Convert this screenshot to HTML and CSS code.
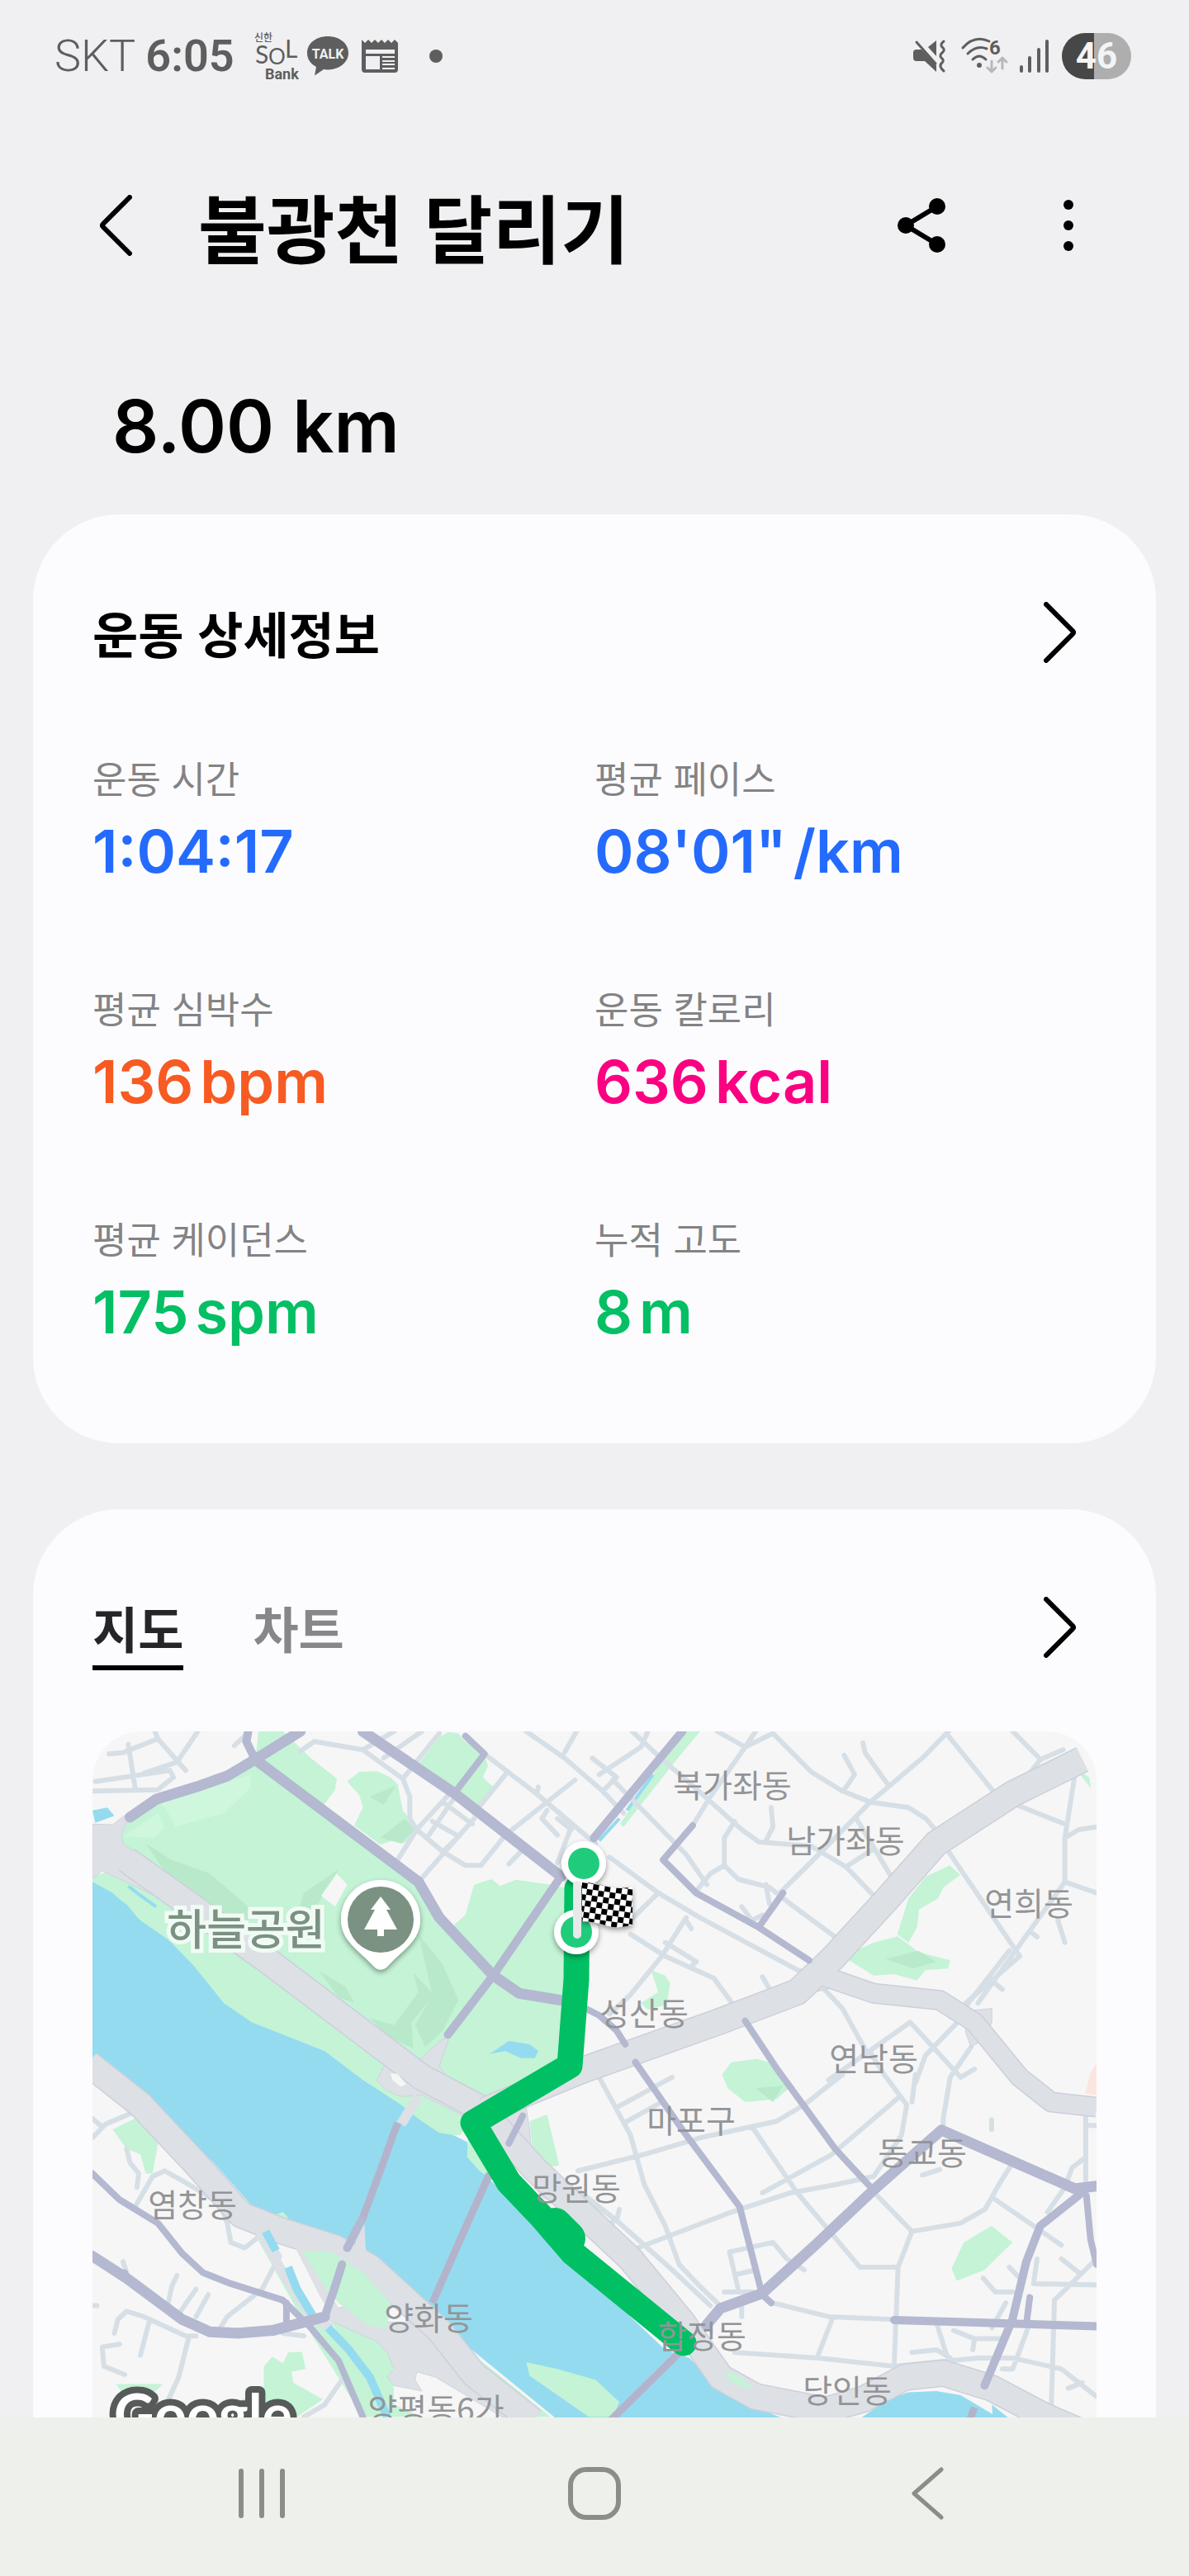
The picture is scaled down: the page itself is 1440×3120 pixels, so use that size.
FILE: index.html
```html
<!DOCTYPE html>
<html lang="ko">
<head>
<meta charset="utf-8">
<meta name="viewport" content="width=device-width, initial-scale=1">
<title>불광천 달리기</title>
<link rel="stylesheet" href="styles.css">
</head>
<body>
<div class="screen">
  <div class="status">
    <div class="status-left">
      <span class="clock"><span class="carrier">SKT</span><time class="time">6:05</time></span>
      <svg class="ico-sol" width="54" height="58" viewBox="0 0 54 58" role="img" aria-label="신한 SOL Bank">
        <text class="sol-ko" x="0" y="11">신한</text>
        <text class="sol-s" x="1" y="38">S</text>
        <text class="sol-o" x="17" y="39">O</text>
        <text class="sol-l" x="37" y="31">L</text>
        <text class="sol-bank" x="13" y="57">Bank</text>
      </svg>
      <svg class="ico-talk" width="50" height="48" viewBox="0 0 50 48" role="img" aria-label="TALK">
        <path d="M25 0C11 0 0 8.500 0 20c0 8 4.500 13.500 11 17l-2 10.500L20 40c1.600.3 3.300.4 5 .4 14 0 25-8.900 25-20.400S39 0 25 0z" fill="#5e5e5e"/>
        <text class="talk-text" x="25" y="27">TALK</text>
      </svg>
      <svg class="ico-news" width="44" height="40" viewBox="0 0 44 40" aria-hidden="true">
        <path d="M0 0l4 4 4-4 4 4 4-4 4 4 4-4 4 4 4-4 4 4 4-4 4 4V36q0 4-4 4H4q-4 0-4-4z" fill="#5e5e5e"/>
        <path d="M5 12h35v5H5zM5 20h17v16H5zM25 20h15v2H25zM25 25h15v2H25zM25 29h15v2H25zM25 34h15v2H25z" fill="#f0f0f2"/>
      </svg>
      <span class="more-dot"></span>
    </div>
    <div class="status-right">
      <svg width="40" height="40" viewBox="0 0 40 40" aria-hidden="true">
        <path d="M28 1v19L18 9zM4 12h6l18 19v8L14 26H4q-4 0-4-4v-6q0-4 4-4z" fill="#5e5e5e"/>
        <path d="M4 3l23 26" stroke="#5e5e5e" stroke-width="3" stroke-linecap="round"/>
        <path d="M37 2q-5 4-2 7 4 3 1 6-5 4-2 7 4 3 1 6-5 4 2 10" fill="none" stroke="#5e5e5e" stroke-width="3" stroke-linecap="round"/>
      </svg>
      <svg class="ico-wifi" width="58" height="46" viewBox="0 0 58 46" aria-hidden="true">
        <g fill="none" stroke="#5e5e5e" stroke-width="3" stroke-linecap="round">
          <path d="M2 13Q16-3 34 5M8 20q11-11 23-6M14 27q8-8 16 0"/>
        </g>
        <circle cx="22" cy="34" r="3" fill="#5e5e5e"/>
        <text class="wifi-six" x="34" y="21">6</text>
        <path d="M37 29v13m-5-5l5 5 5-5M50 38V25m-5 5l5-5 5 5" fill="none" stroke="#b8b8ba" stroke-width="3" stroke-linecap="round" stroke-linejoin="round"/>
      </svg>
      <svg width="38" height="40" viewBox="0 0 38 40" aria-hidden="true">
        <path d="M3 33v5M13 22v16M24 12v26M34 2v36" stroke="#5e5e5e" stroke-width="4" stroke-linecap="round"/>
      </svg>
      <span class="battery">46</span>
    </div>
  </div>

  <header class="topbar">
    <button class="icon-btn" type="button" aria-label="뒤로">
      <svg width="40" height="74" viewBox="0 0 40 74"><path d="M37 3L5 35q-2 2 0 4l32 32" fill="none" stroke="#000" stroke-width="6" stroke-linecap="round"/></svg>
    </button>
    <h1 class="title">불광천 달리기</h1>
    <button class="icon-btn" type="button" aria-label="공유">
      <svg width="58" height="66" viewBox="0 0 58 66"><path d="M48 10L10 33l38 23" fill="none" stroke="#000" stroke-width="6"/><circle cx="10" cy="33" r="10"/><circle cx="48" cy="10" r="10"/><circle cx="48" cy="56" r="10"/></svg>
    </button>
    <button class="icon-btn more" type="button" aria-label="더보기">
      <svg width="12" height="64" viewBox="0 0 12 64"><circle cx="6" cy="7" r="6"/><circle cx="6" cy="32" r="6"/><circle cx="6" cy="57" r="6"/></svg>
    </button>
  </header>

  <main class="content">
    <p class="distance">8.00 km</p>

    <section class="card details">
      <div class="card-head">
        <h2 class="card-title">운동 상세정보</h2>
        <button class="icon-btn chevron" type="button" aria-label="운동 상세정보 열기">
          <svg width="40" height="74" viewBox="0 0 40 74"><path d="M3 3l32 32q2 2 0 4L3 71" fill="none" stroke="#000" stroke-width="6" stroke-linecap="round"/></svg>
        </button>
      </div>
      <dl class="stats">
        <div><dt>운동 시간</dt><dd class="blue">1:04:17</dd></div>
        <div><dt>평균 페이스</dt><dd class="blue">08'01"<span class="unit">/km</span></dd></div>
        <div><dt>평균 심박수</dt><dd class="orange">136<span class="unit">bpm</span></dd></div>
        <div><dt>운동 칼로리</dt><dd class="pink">636<span class="unit">kcal</span></dd></div>
        <div><dt>평균 케이던스</dt><dd class="green">175<span class="unit">spm</span></dd></div>
        <div><dt>누적 고도</dt><dd class="green">8<span class="unit">m</span></dd></div>
      </dl>
    </section>

    <section class="card route">
      <div class="card-head tabs-head">
        <div class="tabs" role="tablist">
          <button class="tab active" type="button" role="tab" aria-selected="true">지도</button>
          <button class="tab" type="button" role="tab" aria-selected="false">차트</button>
        </div>
        <button class="icon-btn chevron" type="button" aria-label="지도 열기">
          <svg width="40" height="74" viewBox="0 0 40 74"><path d="M3 3l32 32q2 2 0 4L3 71" fill="none" stroke="#000" stroke-width="6" stroke-linecap="round"/></svg>
        </button>
      </div>
      <div class="map">
        <svg class="map-svg" viewBox="0 0 1216 900" preserveAspectRatio="xMidYMin slice" role="img" aria-label="달리기 경로 지도">
          <defs>
            <pattern id="check" width="14" height="14" patternUnits="userSpaceOnUse" patternTransform="translate(593 183) rotate(8)">
              <rect width="14" height="14" fill="#fff"/><path d="M0 0h7v7H0zM7 7h7v7H7z"/>
            </pattern>
            <filter id="shade" x="-30%" y="-30%" width="160%" height="160%"><feDropShadow dx="0" dy="3" stdDeviation="3" flood-opacity="0.4"/></filter>
          </defs>
          <g class="base" transform="scale(0.4209 0.3333) translate(-52 -53)">
            <!-- parks north of the river -->
            <path class="park" d="M52 580L90 565 140 590 100 440 165 370 240 300 440 220 520 160 530 53H600L680 150 755 225 750 265 715 325 990 600 1050 730 1085 765 1125 720 1150 610 1200 590 1225 615 1270 592 1370 610 1440 630V1240L1280 1340 1170 1400 1130 1480 1110 1520 1050 1520 930 1500 720 1300 52 700z"/>
            <path class="water" d="M52 600L110 640 190 740 270 810 340 900 430 1040 510 1110 720 1215 830 1320 940 1410 1000 1470 1050 1510 1090 1520 1130 1545 1140 1610 1210 1700 1300 1800 1450 2000 1700 2300 1770 2330 1860 2450 1960 2510 2060 2560 2700 2560 2640 2500 2650 2700H1300L1380 2544 1100 2255 1060 2200 940 2110 830 1940 700 1890 610 1830 520 1790 400 1620 220 1400 130 1315 52 1235z"/>
            <path class="water" d="M2250 2560L2340 2480 2400 2455 2480 2450 2550 2465 2650 2540 2660 2560z"/>
            <path class="park" d="M940 1410L1000 1470 1050 1512 1100 1522 1130 1500 1120 1430 1000 1370zM1132 1535L1130 1600 1165 1650 1210 1690 1190 1600zM785 235L820 200 870 198 910 220 930 245 945 340 985 400 970 440 945 460 915 450 880 465 805 395 830 330 820 285zM985 180L1050 75 1075 55 1105 60 1120 85 1180 135 1190 180 1175 220 1210 260 1180 310 1150 325 1080 260zM1745 53H1800L1730 160 1580 400 1570 390 1660 220zM2519 540L2549 575 2500 620 2485 660 2430 700 2425 765 2400 820 2368 790 2400 660 2450 580zM2224 845L2240 855 2300 820 2369 798 2429 855 2520 885 2514 915 2449 920 2424 958 2359 935 2299 940 2224 880zM1659 920L1700 940 1714 970 1705 1045 1650 1065 1630 1040 1680 1000zM1864 1300L1890 1255 1964 1243 2010 1260 2055 1350 2020 1390 1930 1400 1880 1350zM2639 1850L2699 1910 2619 2010 2539 2050 2524 2005 2559 1910zM110 1500L190 1450 245 1520 225 1660 205 1660 190 1590 150 1570zM545 2360L570 2325 600 2350 615 2310 655 2308 665 2370 625 2380 630 2420 715 2480 640 2544 480 2480 545 2460zM120 2425L255 2425 225 2460 140 2460zM1085 2260L1200 2370 1370 2544 1300 2544 1150 2390zM1300 2345L1390 2370 1500 2410 1568 2490 1550 2544 1480 2544 1310 2395zM2875 180L2920 220 2925 260z"/>
            <path class="park" d="M510 1860L700 2175 850 2400 890 2544H830L660 2200zM740 2200L860 2230 915 2310 920 2500 1000 2544H900zM575 1810L600 1800 615 1820 600 1840z"/>
            <path class="paper" d="M1315 1415L1449 1340V1600L1400 1640 1360 1440z"/>
            <path class="park" d="M1310 1470L1360 1445 1395 1630 1325 1650z"/>
            <path class="park-light" d="M240 300L440 235 510 210 505 260 430 350 290 400 270 350zM140 435L240 350 260 400 230 440z"/>
            <path class="park-dark" d="M205 460L280 520 390 570 500 690 500 740 400 700 280 600zM660 640L760 555 700 680 640 720zM990 790L1060 900 1105 1030 1060 1140 1010 1200 980 1120 1030 1010zM850 1095L920 1120 990 1000 975 930 1035 1010 970 1110 975 1205 900 1160zM705 925L780 980 805 1040 760 1020zM880 440L950 370 980 410 940 460zM850 290L925 250 890 320zM2334 880L2429 850 2480 890 2414 915zM1960 1350L2040 1340 2010 1400z"/>
            <path class="paper" d="M755 570L785 610 750 690 710 650z"/>
            <path class="water" d="M52 340L95 330 115 360 60 385zM1195 1225L1250 1178 1310 1190 1335 1215 1325 1240 1285 1240 1240 1215z"/>
            <path class="stream" d="M155 615L180 640 235 690M110 650L150 690 185 745M1665 210L1590 340M1568 370L1510 450"/>
            <path class="coral" d="M2941 1260L2925 1290 2908 1370 2941 1375z"/>

            <!-- local streets -->
            <path class="street" d="M52 270L240 265 285 220 275 195 60 235M100 135L140 130 240 80 320 195M240 80L232 53M355 53L295 165 200 205M155 100L175 260M460 105L490 70M650 125L690 90 830 120 920 53M830 120L945 225 965 290 965 370 985 410 1060 490 1125 540 1170 540 1240 430 1440 230M985 410L930 520M985 410L1090 265M1020 430L1090 300M1060 310L1145 390M1030 380L1100 430M1150 370L990 600M1060 490L1110 430M1000 53L890 150M945 225L1050 60M1180 135L1330 280 1470 430 1500 460M1330 280L1335 255M1240 210L1150 350M1360 340L1345 370 1390 430M1390 370L1430 410M1300 53L1410 150 1520 270 1580 350M1410 130L1445 53M1520 270L1560 220 1490 150M1250 535L1300 470M1390 530L1430 400"/>
            <path class="street" d="M1605 53L1700 165 1770 240 1920 410 1970 455 2120 470 2220 545 2300 650M1650 53L1630 110 1510 210M1850 53L1930 110 2010 60M1960 53L1930 110 1830 290 1779 395M2010 60L2120 200 2210 270 2290 310 2400 330 2450 370 2490 430M2269 95L2275 130 2340 245M2215 140L2245 210 2215 265M2700 53L2780 155M2515 53L2440 150 2290 310 2150 490 2030 640M2515 70L2650 280 2700 315 2850 390M2845 120L2780 155 2720 250M2880 200L2850 440 2850 600 2600 1040M2941 400L2890 410 2850 440M2850 600L2941 640M2510 480L2720 870 2520 1090M2690 850L2560 1060M2650 970L2670 990M2750 780L2770 800M2830 740L2850 820M1550 230L1760 500 1820 610"/>
            <path class="street" d="M1540 510L1680 640 1800 730 2080 920 2114 930M1680 640L1600 740M1600 790L1700 870 1840 950 1895 1045M1760 730L1690 870 1600 1010 1540 1080M1760 740L1775 770M1700 820L1790 890 1780 900M1900 380L1870 440 1870 540 1910 590 2000 620 2060 680 2200 810M1870 540L1830 570 1785 640M2005 330L2010 400 1990 450M2220 545L2300 480M2250 370L2350 580M1980 945L2000 990M1920 690L1950 740 1980 720M1990 610L2000 680M2150 980L2210 1060 2280 1220M2170 1320L2405 1110 2550 1310 2590 1280M2549 1100L2449 1230 2420 1330M2580 1200L2520 1310 2500 1460 2500 1500M2290 1220L2330 1300 2395 1410 2380 1520 2300 1670 2190 1700 2060 1730 1890 1800 1580 1950M2420 1300L2410 1400"/>
            <path class="street" d="M1510 1310L1600 1520 1640 1700 1700 1850 1740 1990 1800 2070 1850 2130M1560 1420L1720 1310M1590 1470L1690 1400M1449 1650L1640 1590 1800 1530 2020 1470 2100 1410 2210 1300M1950 1490L2080 1730 2240 1970 2260 2000 2360 2000M1980 1730L2180 1590 2370 1385M2310 1740L2410 1870 2370 2000 2359 2350M2410 1870L2550 1840 2620 1790 2660 1700 2700 1620M2645 1750L2840 1920M2440 1665L2490 1645M2639 1465V1500M2910 1450V1700M2910 1600L2870 1640 2850 1710 2800 1800M2910 1485H2941M1460 1740L1560 1830 1720 2010 1830 2140M1550 1830L1540 1880 1580 1950M1449 1720L1560 1830M1885 1945L2010 1910 2050 1970 2100 2010M1885 1945L1910 2080M1870 2090H1950M1910 2025L1960 2010M1920 2120V2180M2010 2130L2170 2180 2360 2190M2180 2190L2140 2320M1900 2310L2140 2330 2359 2360 2600 2330 2700 2330 2840 2370 2941 2470M2480 2200L2510 2320M2530 2230L2590 2260 2680 2260M2590 2260L2585 2300M2410 2310L2480 2300 2520 2330M2760 2060L2941 2065M2770 1970L2760 2060M2941 1970L2820 2120 2810 2544M2840 1970L2890 2020M2690 2000L2720 2040M2615 2040L2650 2090 2700 2090M2680 2130L2640 2220M2750 2200L2700 2370 2670 2370M2860 2440L2900 2420"/>
            <path class="street" d="M52 1530L90 1480 165 1440M52 1460L80 1490M150 1570L160 1620 185 1660 180 1710M175 1780L225 1670 260 1650 330 1700 420 1770 440 1840 450 1910 490 1930 530 1890M140 1980L150 2020M295 2030L280 2070 270 2130M350 2080L300 2170M385 2100L350 2180M115 2240L125 2190 150 2160 200 2180 320 2250 350 2250M215 2200L190 2320M130 2280L80 2290 85 2360 145 2390M330 2250L300 2400 260 2510 240 2544M420 2220L440 2180 540 2080 590 1960 560 1900 520 1850M600 2240L660 2250M770 2410L720 2500 660 2544M52 2140H65M1568 1790L1560 1830"/>

            <!-- expressways -->
            <path class="hwy-fill" d="M52 390L110 392 165 340 135 430 140 460 215 530 215 560 260 600 230 650 150 600 80 560 52 590zM870 1320L900 1250 1000 1240 1050 1180 1080 1160 1050 1270 1110 1370 1170 1400 1120 1450 1000 1375 940 1380 900 1360zM735 2155L790 2140 900 2200 1060 2200 1160 2400 1310 2544H1230L1040 2400 985 2380 980 2410 1000 2450 920 2430 900 2400 920 2370 900 2310 870 2270 780 2220 730 2190zM1190 1490L1300 1420 1310 1500 1320 1650 1400 1760 1350 1750zM2130 930L2185 830 2190 880 2180 940 2200 980 2130 1000zM2560 1070L2640 1060 2640 1110 2620 1170 2580 1200 2565 1150z"/>
            <path class="hwy-edge wide" d="M150 520L250 610 560 890 1000 1310 1180 1430"/>
            <path class="hwy wide" d="M150 520L250 610 560 890 1000 1310 1180 1430"/>
            <path class="hwy-edge wide" d="M1200 1470L1330 1650 1600 1970 1750 2200 1810 2310 1860 2400 1960 2470 2160 2520 2270 2480 2390 2400 2500 2385 2640 2440 2790 2540 2900 2600"/>
            <path class="hwy wide" d="M1200 1470L1330 1650 1600 1970 1750 2200 1810 2310 1860 2400 1960 2470 2160 2520 2270 2480 2390 2400 2500 2385 2640 2440 2790 2540 2900 2600"/>
            <path class="hwy-edge wide" d="M1180 1430L1460 1285 1850 1110 2080 1000 2180 880 2340 660 2480 460 2700 280 2900 155"/>
            <path class="hwy-edge mid" d="M2150 940L2300 1005 2490 1030 2590 1110 2720 1310 2810 1400 2941 1418"/>
            <path class="hwy wide" d="M1180 1430L1460 1285 1850 1110 2080 1000 2180 880 2340 660 2480 460 2700 280 2900 155"/>
            <path class="hwy mid" d="M2150 940L2300 1005 2490 1030 2590 1110 2720 1310 2810 1400 2941 1418"/>
            <path class="hwy-edge wide" d="M40 1260L190 1410 350 1625 480 1810 600 1870 750 1930 850 2000 1050 2230 1150 2390 1320 2560"/>
            <path class="hwy wide" d="M40 1260L190 1410 350 1625 480 1810 600 1870 750 1930 850 2000 1050 2230 1150 2390 1320 2560"/>
            <path class="hwy ramp" d="M530 1860L590 2000 680 2180 740 2220M640 1900L720 2100 750 2160M820 1840L825 1960M940 1480L990 1380"/>
            <path class="park" d="M655 1940L740 1945 830 2020 910 2130 900 2220 850 2215 760 2130 725 2080z"/>
            <path class="channel" d="M550 1870L580 1940M615 2000L640 2080 685 2175M730 2220L790 2300 850 2400 900 2544"/>
            <path class="park" d="M1870 2375L1920 2400 1955 2445 1890 2420z"/>
            <path class="paper" d="M910 1295L930 1298 955 1335 940 1345 915 1320z"/>

            <!-- arterial roads -->
            <path class="road thick" d="M160 365L235 300 350 255 440 215 520 155 650 53M520 155L990 600 1050 730 1205 940 1280 1005 1400 1030M830 53L1090 275 1400 580M1819 2210L1859 2150 1979 2095 2140 1910 2299 1720 2495 1502 2879 1715 2941 1705M52 1960L150 2040 310 2190 390 2235 470 2240 570 2230 720 2180"/>
            <path class="road" d="M500 53L495 90 520 155M1075 1155L1205 940 1400 580M1495 440L1749 53M720 2180L745 2090 770 1990M785 1930L830 1820M2899 1730L2779 1850 2739 1980 2699 2190 2619 2430M2359 2192L2619 2202 2941 2215"/>
            <path class="road thin" d="M1125 70L1180 135 1095 275M1440 1040L1510 1085 1560 1140 1585 1190M1779 395L1694 520 1789 640 1969 765 2114 885M2039 640L1969 765M1930 1105L2019 1275 2189 1570 2299 1720M1614 1255L1749 1500 1914 1780 1979 2100 2005 2130M2912 1740L2924 1900 2941 1990M2749 2110L2741 2190M52 1660L130 1755 240 1840 310 1950 370 2020 450 2060 600 2120 680 2220 760 2340 830 2544M610 2130V2200M1250 1550L1290 1450M145 2020L140 2040"/>
            <path class="bridge" d="M830 1820L880 1650 930 1475M1030 2130L1110 1900 1195 1660M1540 2560L1749 2300M2575 2560L2590 2510"/>
          </g>

          <g class="place">
            <text x="775" y="80">북가좌동</text>
            <text x="912" y="147">남가좌동</text>
            <text x="1134" y="223">연희동</text>
            <text x="668" y="356">성산동</text>
            <text x="946" y="411">연남동</text>
            <text x="725" y="486">마포구</text>
            <text x="1005" y="525">동교동</text>
            <text x="121" y="588">염창동</text>
            <text x="407" y="725">양화동</text>
            <text x="914" y="813">당인동</text>
            <text x="416" y="836">양평동6가</text>
          </g>

          <path class="run" d="M587 190L586 300 578 405 461 474 504 546 544 588 582 632 716 741"/>
          <path class="run bulge" d="M560 598L576 614"/>
          <g class="place">
            <text x="586" y="568">망원동</text>
            <text x="738" y="747">합정동</text>
          </g>
          <text class="park-name" x="186" y="259">하늘공원</text>
          <g filter="url(#shade)">
            <path d="M349 180c-27 0-48 21-48 48 0 26 22 37 38 55q10 11 20 0c16-18 38-29 38-55 0-27-21-48-48-48z" fill="#fff"/>
          </g>
          <circle cx="349" cy="228" r="40" fill="#7b9182"/>
          <path d="M349 200l-12 16h5l-13 24h16v8h8v-8h16l-13-24h5z" fill="#fff"/>
          <g filter="url(#shade)"><circle cx="586" cy="243" r="27" fill="#fff"/><circle cx="595" cy="160" r="27" fill="#fff"/></g>
          <circle cx="586" cy="243" r="19" fill="#20cc7b"/>
          <circle cx="595" cy="160" r="19" fill="#20cc7b"/>
          <path d="M593 183q14 0 30 5 16 4 31 0v46q-16 6-32 1-15-5-29-5z" fill="url(#check)" filter="url(#shade)"/>
          <path d="M587 186v60" stroke="#e9e9ec" stroke-width="10" stroke-linecap="round"/>
          <text class="google" x="26" y="852">Google</text>
        </svg>
      </div>
    </section>
  </main>

  <nav class="navbar" aria-label="시스템 탐색">
    <button class="icon-btn" type="button" aria-label="최근 앱"><svg width="58" height="64" viewBox="0 0 58 64"><path d="M4 5v54M29 5v54M54 5v54" stroke="#8b8e86" stroke-width="6" stroke-linecap="round"/></svg></button>
    <button class="icon-btn" type="button" aria-label="홈"><svg width="64" height="64" viewBox="0 0 64 64"><rect x="3" y="3" width="58" height="58" rx="19" fill="none" stroke="#8b8e86" stroke-width="6"/></svg></button>
    <button class="icon-btn" type="button" aria-label="이전"><svg width="40" height="64" viewBox="0 0 40 64"><path d="M37 3L4 32l33 29" fill="none" stroke="#8b8e86" stroke-width="5" stroke-linecap="round" stroke-linejoin="round"/></svg></button>
  </nav>
</div>
</body>
</html>
```
FILE: styles.css
```css
* { box-sizing: border-box; }

body {
  margin: 0;
  background: #f0f0f2;
  color: #000;
  font-family: "Noto Sans CJK KR", sans-serif;
}

h1, h2, p, dl, dd { margin: 0; }

.screen {
  display: flex;
  flex-direction: column;
  height: 100vh;
}

.icon-btn {
  display: flex;
  align-items: center;
  justify-content: center;
  padding: 0;
  border: 0;
  background: none;
}

/* status bar */
.status {
  flex: none;
  display: flex;
  align-items: center;
  justify-content: space-between;
  height: 136px;
  padding: 0 70px 0 66px;
  color: #5e5e5e;
  font-family: Roboto, sans-serif;
}

.status-left,
.status-right {
  display: flex;
  align-items: center;
}

.clock {
  display: flex;
  gap: 12px;
  font-size: 54px;
  line-height: 64px;
}
.carrier { font-weight: 300; }
.time { font-weight: 600; }

.ico-sol { margin-left: 24px; }
.ico-talk { margin-left: 10px; }
.ico-news { margin-left: 16px; }

.status svg { overflow: visible; }
.status text { fill: #5e5e5e; }
.sol-ko { font: 500 12px "Noto Sans CJK KR", sans-serif; }
.sol-s { font: 400 30px Lato, sans-serif; }
.sol-o { font: 400 26px Lato, sans-serif; }
.sol-l { font: 400 30px Lato, sans-serif; }
.sol-bank { font: 700 18px Roboto, sans-serif; }
.status .talk-text { fill: #f0f0f2; font: 700 16px Roboto, sans-serif; text-anchor: middle; }
.wifi-six { font: 700 24px Roboto, sans-serif; }

.more-dot {
  width: 16px;
  height: 16px;
  margin-left: 38px;
  border-radius: 50%;
  background: #5e5e5e;
}

.status-right { gap: 12px; }
.ico-wifi { margin-left: 6px; }

.battery {
  width: 84px;
  margin-left: 2px;
  border-radius: 28px;
  background: linear-gradient(90deg, #474747 46%, #aeaeae 46%);
  color: #f4f4f4;
  font-size: 44px;
  font-weight: 700;
  line-height: 56px;
  text-align: center;
}

/* title bar */
.topbar {
  flex: none;
  display: flex;
  align-items: center;
  height: 274px;
  padding: 0 140px 0 120px;
}

.title {
  flex: 1;
  margin-left: 80px;
  font-size: 90px;
  font-weight: 700;
  line-height: 128px;
}

.more { margin-left: 143px; }

/* scrolling content */
.content {
  flex: 1;
  min-height: 0;
  overflow: hidden auto;
  padding: 0 40px;
  scrollbar-width: none;
}

.distance {
  padding: 42px 96px 43px;
  font-family: Inter, sans-serif;
  font-size: 88px;
  font-weight: 600;
  line-height: 128px;
}

.card {
  padding: 99px 72px 115px;
  border-radius: 104px;
  background: #fcfcfe;
}
.card + .card { margin-top: 80px; }

.card-head {
  display: flex;
  align-items: flex-start;
  justify-content: space-between;
}

.card-title {
  font-size: 60px;
  font-weight: 700;
  line-height: 88px;
}

.chevron {
  height: 88px;
  margin-right: 24px;
}

.stats {
  display: grid;
  grid-template-columns: 1fr 1fr;
  row-gap: 116px;
  margin-top: 102px;
}

.stats dt {
  color: #838385;
  font-size: 45px;
  line-height: 60px;
}

.stats dd {
  display: flex;
  gap: 8px;
  margin-top: 15px;
  font-family: Inter, sans-serif;
  font-size: 72px;
  font-weight: 600;
  line-height: 88px;
}

.blue { color: #246bfd; }
.orange { color: #f75a22; }
.pink { color: #fb0081; }
.green { color: #04bf64; }

.tabs {
  display: flex;
  gap: 84px;
}

.tab {
  padding: 0 0 2px;
  border: 0;
  border-bottom: 6px solid transparent;
  background: none;
  color: #87878a;
  font: 700 60px/88px "Noto Sans CJK KR", sans-serif;
}
.tab.active {
  border-color: #000;
  color: #252528;
}

/* map */
.map {
  height: 900px;
  margin-top: 74px;
  border-radius: 60px;
  background: #f6f6f6;
  overflow: hidden;
}
.map-svg {
  display: block;
  width: 100%;
  height: 100%;
}

.base path { stroke-linejoin: round; vector-effect: non-scaling-stroke; }
.park { fill: #c4f3d6; }
.park-light { fill: #cff7dd; }
.park-dark { fill: #b9e9cb; }
.paper { fill: #f6f6f6; }
.water { fill: #94dbf0; }
.coral { fill: #fde5df; }
.stream { fill: none; stroke: #94dbf0; stroke-width: 4; }
.channel { fill: none; stroke: #94dbf0; stroke-width: 10; }
.street { fill: none; stroke: #d7dfe6; stroke-width: 6; stroke-linecap: round; }
.hwy-fill { fill: #dde1e6; stroke: #d0d2dd; stroke-width: 1; }
.hwy-edge { fill: none; stroke: #cccfda; }
.hwy { fill: none; stroke: #dde1e6; }
.hwy-edge.wide { stroke-width: 33; }
.hwy.wide { stroke-width: 30; }
.hwy-edge.mid { stroke-width: 25; }
.hwy.mid { stroke-width: 22; }
.hwy.ramp { stroke-width: 12; }
.road { fill: none; stroke: #b4b8d0; stroke-width: 10; stroke-linecap: round; }
.road.thick { stroke-width: 13; }
.road.thin { stroke-width: 8; }
.bridge { fill: none; stroke: #b3b4cb; stroke-width: 9; }

.run {
  fill: none;
  stroke: #00c063;
  stroke-width: 31;
  stroke-linecap: round;
  stroke-linejoin: round;
}
.bulge { stroke-width: 42; }

.place text {
  fill: #939497;
  font: 400 39px "Noto Sans CJK KR", sans-serif;
  text-anchor: middle;
}
.park-name {
  fill: #7b9182;
  stroke: #f1fbf5;
  stroke-width: 10;
  paint-order: stroke;
  font: 500 52px "Noto Sans CJK KR", sans-serif;
  text-anchor: middle;
}
.google {
  fill: #fff;
  stroke: #565a58;
  stroke-width: 16;
  stroke-linejoin: round;
  paint-order: stroke;
  font: 700 68px Lato, sans-serif;
}

/* system navigation */
.navbar {
  flex: none;
  display: grid;
  grid-template-columns: repeat(3, 1fr);
  height: 192px;
  padding: 0 116px 8px;
  background: #eef1eb;
}
```
